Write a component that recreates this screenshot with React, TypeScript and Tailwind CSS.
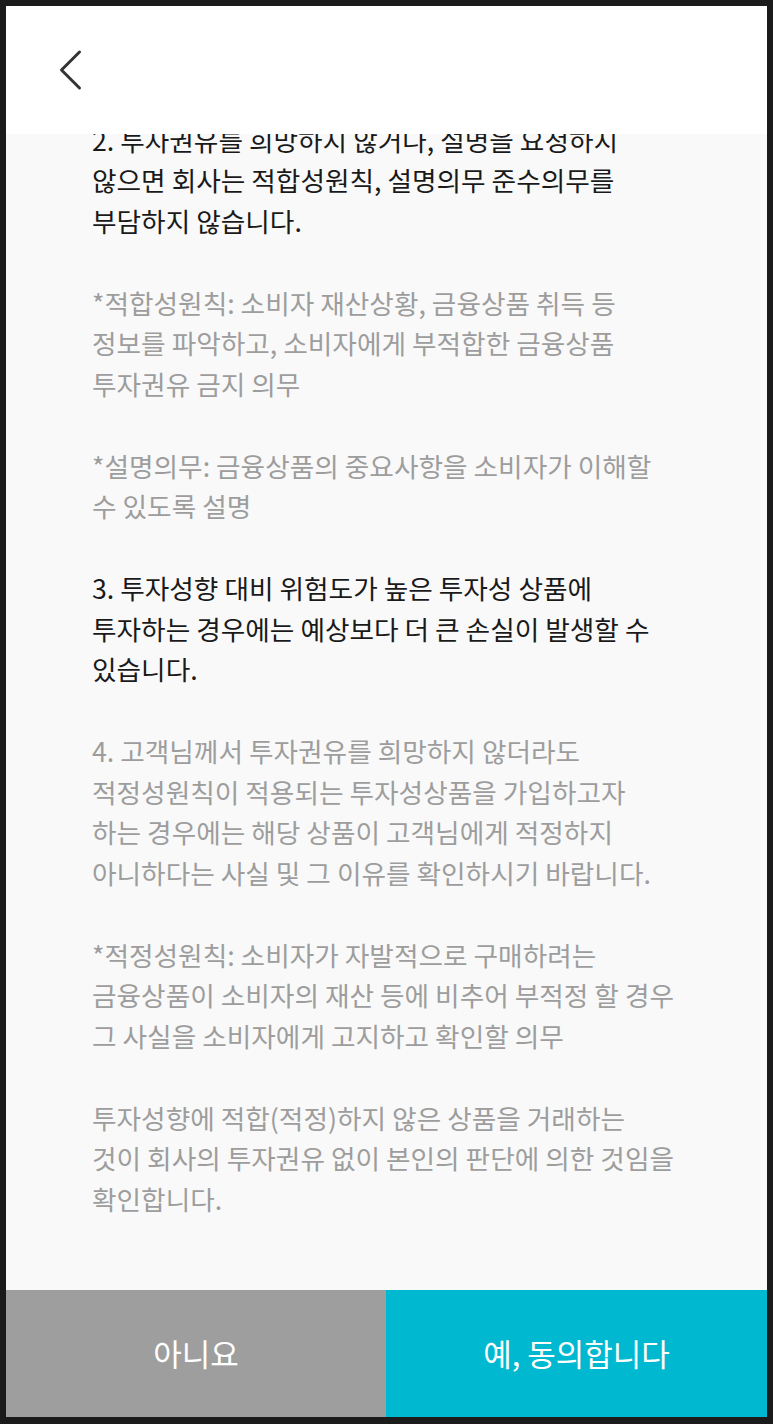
import React from "react";

type Para = { tone: "dark" | "gray"; lines: string[] };

const PARAS: Para[] = [
  {
    tone: "dark",
    lines: [
      "2. 투자권유를 희망하지 않거나, 설명을 요청하지",
      "않으면 회사는 적합성원칙, 설명의무 준수의무를",
      "부담하지 않습니다.",
    ],
  },
  {
    tone: "gray",
    lines: [
      "*적합성원칙: 소비자 재산상황, 금융상품 취득 등",
      "정보를 파악하고, 소비자에게 부적합한 금융상품",
      "투자권유 금지 의무",
    ],
  },
  {
    tone: "gray",
    lines: ["*설명의무: 금융상품의 중요사항을 소비자가 이해할", "수 있도록 설명"],
  },
  {
    tone: "dark",
    lines: [
      "3. 투자성향 대비 위험도가 높은 투자성 상품에",
      "투자하는 경우에는 예상보다 더 큰 손실이 발생할 수",
      "있습니다.",
    ],
  },
  {
    tone: "gray",
    lines: [
      "4. 고객님께서 투자권유를 희망하지 않더라도",
      "적정성원칙이 적용되는 투자성상품을 가입하고자",
      "하는 경우에는 해당 상품이 고객님에게 적정하지",
      "아니하다는 사실 및 그 이유를 확인하시기 바랍니다.",
    ],
  },
  {
    tone: "gray",
    lines: [
      "*적정성원칙: 소비자가 자발적으로 구매하려는",
      "금융상품이 소비자의 재산 등에 비추어 부적정 할 경우",
      "그 사실을 소비자에게 고지하고 확인할 의무",
    ],
  },
  {
    tone: "gray",
    lines: [
      "투자성향에 적합(적정)하지 않은 상품을 거래하는",
      "것이 회사의 투자권유 없이 본인의 판단에 의한 것임을",
      "확인합니다.",
    ],
  },
];

export default function App() {
  return (
    <div
      className="flex h-[1424px] w-[773px] flex-col bg-[#1b1b1b] px-[6px] pt-[6px] pb-[7px]"
      style={{ fontFamily: '"Noto Sans CJK KR", "Noto Sans", sans-serif' }}
    >
      {/* Header */}
      <header className="h-[128px] shrink-0 bg-white pl-[52px] pt-[43px]">
        <button type="button" aria-label="뒤로" className="block">
          <svg width="24" height="42" viewBox="0 0 24 42" fill="none">
            <path
              d="M21.5 3 L3.5 21 L21.5 39"
              stroke="#333333"
              strokeWidth="3"
              strokeLinecap="round"
              strokeLinejoin="round"
            />
          </svg>
        </button>
      </header>

      {/* Scrolled terms body */}
      <main className="flex-1 overflow-hidden bg-[#f9f9f9]">
        <div className="-mt-[14.5px] flex flex-col gap-[40.75px] pl-[86px] text-[26.7px] leading-[40.75px]">
          {PARAS.map((p, i) => (
            <p
              key={i}
              className={`whitespace-nowrap ${
                p.tone === "dark" ? "text-[#1a1a1a]" : "text-[#9d9d9d]"
              }`}
            >
              {p.lines.map((l, j) => (
                <span key={j} className="block">
                  {l}
                </span>
              ))}
            </p>
          ))}
        </div>
      </main>

      {/* Actions */}
      <footer className="flex h-[127px] shrink-0">
        <button
          type="button"
          className="flex w-[380px] items-center justify-center bg-[#9e9e9e] text-[31px] text-white"
        >
          아니요
        </button>
        <button
          type="button"
          className="flex flex-1 items-center justify-center bg-[#00b8d0] text-[31px] text-white"
        >
          예, 동의합니다
        </button>
      </footer>
    </div>
  );
}
